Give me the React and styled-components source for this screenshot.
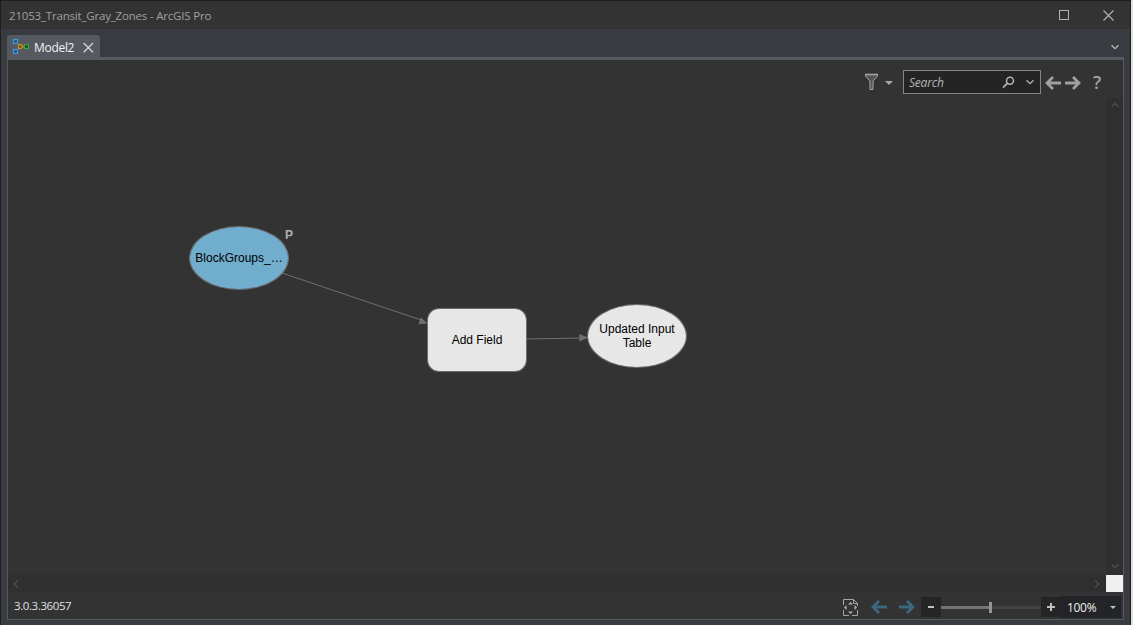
import React, { useState } from 'react';
import styled, { createGlobalStyle } from 'styled-components';

const GlobalStyle = createGlobalStyle`
  * {
    box-sizing: border-box;
  }

  body {
    margin: 0;
    background: #e3e1e0;
    font-family: "Open Sans", "Noto Sans", sans-serif;
    font-size: 12px;
    overflow: hidden;
  }

  svg {
    display: block;
    flex: none;
  }
`;

const nodes = [
  { id: 'input', label: 'BlockGroups_…', shape: 'ellipse', color: '#71adcc', x: 181, y: 129, parameter: true },
  { id: 'tool', label: 'Add Field', shape: 'rect', color: '#e7e7e7', x: 419, y: 211 },
  { id: 'output', label: 'Updated Input Table', shape: 'ellipse', color: '#e7e7e7', x: 579, y: 207 },
];

function ModelIcon() {
  return (
    <svg width="17" height="16" viewBox="0 0 17 16" fill="none">
      <path d="M10 8.5h2" stroke="#8d8d8d" />
      <rect x="1.5" y="1.5" width="4" height="4" fill="#24567c" stroke="#3f9bdc" strokeWidth="1.2" />
      <rect x="1.5" y="11.5" width="4" height="4" fill="#24567c" stroke="#3f9bdc" strokeWidth="1.2" />
      <path d="M6.5 6.5h2.5l2 2-2 2H6.5z" fill="#6d5514" stroke="#c79a22" strokeWidth="1.2" />
      <rect x="12.5" y="6.5" width="4" height="4" fill="#1c5423" stroke="#43a047" strokeWidth="1.2" />
    </svg>
  );
}

function FilterIcon() {
  return (
    <svg width="15" height="18" viewBox="0 0 15 18" fill="none">
      <path d="M1.5 1.5h12v1.5L9 8v8.5H6V8L1.5 3z" fill="#555" stroke="#a3a3a3" />
      <path d="M1 1.5h13" stroke="#a3a3a3" strokeWidth="1.6" />
    </svg>
  );
}

function ArrowIcon({ flip }) {
  return (
    <svg width="16" height="14" viewBox="0 0 16 14" fill="none" stroke="currentColor" strokeWidth="2.8">
      <path transform={flip ? 'matrix(-1 0 0 1 16 0)' : undefined} d="M0 7h13.5M8 1l6 6-6 6" />
    </svg>
  );
}

function Chevron({ dir = 'down', size = 8 }) {
  const turn = { down: 0, left: 90, up: 180, right: 270 }[dir];
  return (
    <svg width={size} height={size} viewBox="0 0 8 8" fill="none" stroke="currentColor" strokeWidth="1.3">
      <path transform={`rotate(${turn} 4 4)`} d="M0.5 2.2L4 5.7l3.5-3.5" />
    </svg>
  );
}

function FullExtentIcon() {
  return (
    <svg width="15" height="17" viewBox="0 0 15 17" fill="none">
      <path
        d="M6 .5H.5V6M.5 11v5.5H6M9 16.5h5.5V11M14.5 7V4.500L10.500 .5H5M10.500 .5v4h4"
        stroke="#a6a6a6"
      />
      <path d="M7.5 3l2.500 2.500H5zM7.5 15l2.500-2.500H5zM1 8.500l2.500-2.500v5zM14 8.500l-2.500-2.500v5z" fill="#b0b0b0" />
    </svg>
  );
}

function App() {
  const [search, setSearch] = useState('');
  const [zoom] = useState(100);

  return (
    <>
      <GlobalStyle />
      <Window>
        <TitleBar>
          <Title>21053_Transit_Gray_Zones - ArcGIS Pro</Title>
          <WindowButtons>
            <svg width="10" height="10" fill="none" stroke="#b4b4b4">
              <rect x=".5" y=".5" width="9" height="9" />
            </svg>
            <svg width="11" height="11" fill="none" stroke="#b4b4b4" strokeWidth="1.1">
              <path d="M.5 .5l10 10M10.5 .5l-10 10" />
            </svg>
          </WindowButtons>
        </TitleBar>

        <TabRow>
          <Tab>
            <ModelIcon />
            <TabLabel>Model2</TabLabel>
            <svg width="11" height="11" fill="none" stroke="#d6d6d6" strokeWidth="1.3">
              <path d="M.7 1l9.300 9.300M10 1L.7 10.300" />
            </svg>
          </Tab>
          <TabMenu>
            <Chevron />
          </TabMenu>
        </TabRow>

        <Panel>
          <Toolbar>
            <FilterIcon />
            <FilterCaret />
            <SearchBox>
              <SearchInput placeholder="Search" value={search} onChange={(e) => setSearch(e.target.value)} />
              <svg width="13" height="13" viewBox="0 0 13 13" fill="none" stroke="#b4b4b4">
                <circle cx="8" cy="4.7" r="3.5" strokeWidth="1.5" />
                <path d="M5.3 7.4L1 11.7" strokeWidth="1.8" />
              </svg>
              <Chevron />
            </SearchBox>
            <NavArrows>
              <ArrowIcon flip />
              <ArrowIcon />
            </NavArrows>
            <Help>?</Help>
          </Toolbar>

          <Workspace>
            <Canvas>
              <Connectors width="1098" height="478">
                <path d="M274 175L413 222M519 241L573 240" stroke="#707070" fill="none" />
                <path d="M419.5 225.5L410.5 226.2L412.8 219.3zM580 239.5L571.5 243.5L571.3 236z" fill="#707070" />
              </Connectors>
              {nodes.map((node) => (
                <Node key={node.id} $shape={node.shape} $color={node.color} $x={node.x} $y={node.y}>
                  <NodeLabel>{node.label}</NodeLabel>
                  {node.parameter && <ParameterMark>P</ParameterMark>}
                </Node>
              ))}
            </Canvas>
            <VerticalScroll>
              <Chevron dir="up" />
              <Chevron />
            </VerticalScroll>
            <HorizontalScroll>
              <Chevron dir="left" />
              <Chevron dir="right" />
            </HorizontalScroll>
            <ScrollCorner />
          </Workspace>

          <StatusBar>
            <Version>3.0.3.36057</Version>
            <FullExtentIcon />
            <ExtentArrows>
              <ArrowIcon flip />
              <ArrowIcon />
            </ExtentArrows>
            <ZoomButton>
              <svg width="6" height="2" fill="#c0c0c0">
                <rect width="6" height="2" />
              </svg>
            </ZoomButton>
            <Slider>
              <SliderTrack $filled />
              <SliderThumb />
              <SliderTrack />
            </Slider>
            <ZoomButton>
              <svg width="8" height="8" fill="none" stroke="#c0c0c0" strokeWidth="2">
                <path d="M0 4h8M4 0v8" />
              </svg>
            </ZoomButton>
            <ZoomSelect>
              {zoom}%
              <SmallCaret />
            </ZoomSelect>
          </StatusBar>
        </Panel>
      </Window>
    </>
  );
}

const Window = styled.div`
  display: flex;
  flex-direction: column;
  width: 1131px;
  height: 625px;
  background: #383b40;
  border: solid #1e1e1f;
  border-width: 1px 1px 0;
`;

const TitleBar = styled.header`
  display: flex;
  justify-content: space-between;
  align-items: center;
  height: 28px;
  padding: 0 16px 0 8px;
  background: #333333;
`;

const Title = styled.span`
  padding-top: 2px;
  color: #a0a0a0;
  font-size: 11.5px;
  line-height: 16px;
  letter-spacing: -0.19px;
  white-space: nowrap;
`;

const WindowButtons = styled.div`
  display: flex;
  align-items: center;
  gap: 34px;
`;

const TabRow = styled.div`
  display: flex;
  justify-content: space-between;
  align-items: flex-end;
  height: 28px;
  padding-left: 6px;
`;

const Tab = styled.div`
  display: flex;
  align-items: center;
  width: 93px;
  height: 22px;
  padding: 2px 0 0 5px;
  background: #565961;
  border-radius: 3px 3px 0 0;

  > svg:first-child {
    margin-bottom: 3px;
  }
`;

const TabLabel = styled.span`
  flex: none;
  width: 54px;
  padding: 1px 0 0 5px;
  color: #f2f2f2;
  font-size: 12px;
  line-height: 16px;
  letter-spacing: -0.3px;
`;

const TabMenu = styled.div`
  padding: 0 11px 6px 0;
  color: #b8b8b8;
`;

const Panel = styled.main`
  display: flex;
  flex-direction: column;
  flex: 1;
  margin: 0 6px 5px;
  background: #333333;
  border: 1px solid #565961;
  border-top-width: 3px;
`;

const Toolbar = styled.div`
  display: flex;
  justify-content: flex-end;
  align-items: center;
  height: 38px;
  padding: 6px 22px 0 0;
`;

const Caret = styled.span`
  width: 0;
  height: 0;
  border: solid transparent;
`;

const FilterCaret = styled(Caret)`
  margin: 2px 10px 0 6px;
  border-width: 4px 4px 0;
  border-top-color: #a8a8a8;
`;

const SmallCaret = styled(Caret)`
  border-width: 3px 3px 0;
  border-top-color: #c0c0c0;
`;

const SearchBox = styled.div`
  display: flex;
  align-items: center;
  width: 138px;
  height: 24px;
  padding: 0 6px 0 5px;
  background: #242424;
  border: 1px solid #858585;
  color: #b4b4b4;

  > svg:last-child {
    margin-left: 11px;
  }
`;

const SearchInput = styled.input`
  flex: 1;
  min-width: 0;
  padding: 1px 0 0;
  background: none;
  border: 0;
  outline: 0;
  color: #c0c0c0;
  font: italic 12px "Open Sans", sans-serif;
  letter-spacing: -0.2px;

  &::placeholder {
    color: #b5b5b5;
    opacity: 1;
  }
`;

const NavArrows = styled.div`
  display: flex;
  gap: 4px;
  margin: 1px 0 0 4px;
  color: #a0a0a0;
`;

const Help = styled.span`
  width: 8px;
  margin-left: 12px;
  color: #a0a0a0;
  font-size: 18px;
  font-weight: 600;
  line-height: 20px;
`;

const Workspace = styled.div`
  display: grid;
  grid-template-columns: 1fr 17px;
  grid-template-rows: 1fr 17px;
  flex: 1;
`;

const Canvas = styled.section`
  position: relative;
  overflow: hidden;
`;

const Connectors = styled.svg`
  position: absolute;
  top: 0;
  left: 0;
`;

const Node = styled.div`
  position: absolute;
  top: ${(props) => props.$y - 1}px;
  left: ${(props) => props.$x}px;
  display: flex;
  align-items: center;
  justify-content: center;
  width: 100px;
  height: 64px;
  background: ${(props) => props.$color};
  background-clip: padding-box;
  border: 1px solid #a8a8a880;
  border-radius: ${(props) => (props.$shape === 'ellipse' ? '50%' : '12px')};
  color: #000;
  font: 12px/14px "Liberation Sans", Arial, sans-serif;
`;

const NodeLabel = styled.span`
  max-width: 88px;
  text-align: center;
`;

const ParameterMark = styled.span`
  position: absolute;
  top: 1px;
  left: 95px;
  color: #b0b0b0;
  font-weight: 700;
`;

const VerticalScroll = styled.div`
  display: flex;
  flex-direction: column;
  align-items: center;
  justify-content: space-between;
  padding: 3px 0 5px 0;
  background: #2f2f2f;
  color: #505050;
`;

const HorizontalScroll = styled.div`
  display: flex;
  align-items: center;
  justify-content: space-between;
  padding: 0 5px 0 4px;
  background: #2f2f2f;
  color: #505050;
`;

const ScrollCorner = styled.div`
  background: #f0f0f0;
`;

const StatusBar = styled.footer`
  display: flex;
  align-items: center;
  height: 27px;
  padding: 3px 2px 0 6px;
`;

const Version = styled.span`
  flex: 1;
  padding-bottom: 3px;
  color: #e0e0e0;
  font-size: 11.5px;
  line-height: 16px;
  letter-spacing: -0.4px;
`;

const ExtentArrows = styled.div`
  display: flex;
  gap: 12px;
  margin: 0 6px 0 13px;
  color: #3d6680;
`;

const ZoomButton = styled.div`
  display: flex;
  align-items: center;
  justify-content: center;
  width: 20px;
  height: 20px;
  background: #252525;
`;

const Slider = styled.div`
  display: flex;
  align-items: center;
  width: 100px;
`;

const SliderTrack = styled.div`
  flex: ${(props) => (props.$filled ? '0 0 48px' : 1)};
  height: 3px;
  background: ${(props) => (props.$filled ? '#747474' : '#434343')};
`;

const SliderThumb = styled.div`
  width: 3px;
  height: 11px;
  background: #969696;
`;

const ZoomSelect = styled.div`
  display: flex;
  align-items: center;
  justify-content: space-between;
  width: 60px;
  height: 22px;
  padding: 0 5px 0 6px;
  background: #232427;
  color: #f0f0f0;
  font-size: 12px;
  letter-spacing: -0.3px;
`;

export default App;
